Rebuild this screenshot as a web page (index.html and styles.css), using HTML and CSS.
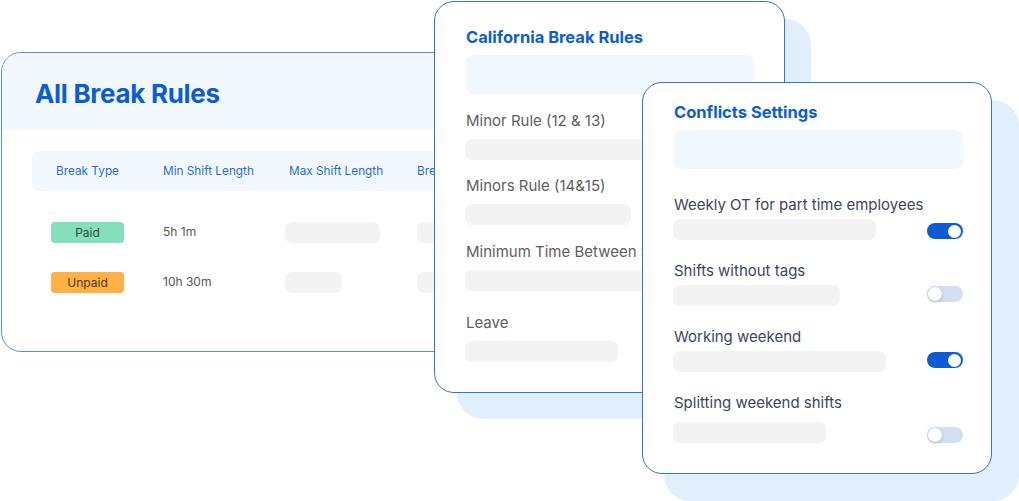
FILE: index.html
```html
<!DOCTYPE html>
<html lang="en">
<head>
<meta charset="utf-8">
<title>Break Rules</title>
<link rel="stylesheet" href="styles.css">
</head>
<body>
<div class="canvas">
  <section class="card card-all">
    <header class="all-head"><h1 class="all-title">All Break Rules</h1></header>
    <div class="table">
      <div class="thead">
        <span>Break Type</span>
        <span>Min Shift Length</span>
        <span>Max Shift Length</span>
        <span>Break Length</span>
      </div>
      <div class="trow">
        <span class="pill pill-paid">Paid</span>
        <span class="cell">5h 1m</span>
        <span class="bar bar-w95"></span>
        <span class="bar bar-w80"></span>
      </div>
      <div class="trow">
        <span class="pill pill-unpaid">Unpaid</span>
        <span class="cell">10h 30m</span>
        <span class="bar bar-w57"></span>
        <span class="bar bar-w80"></span>
      </div>
    </div>
  </section>

  <div class="backdrop backdrop-ca"></div>
  <section class="card card-ca">
    <h2 class="card-title">California Break Rules</h2>
    <div class="lightbox"></div>
    <div class="field">
      <div class="label">Minor Rule (12 &amp; 13)</div>
      <div class="bar fbar bar-w240"></div>
    </div>
    <div class="field field-tight">
      <div class="label">Minors Rule (14&amp;15)</div>
      <div class="bar fbar bar-w166"></div>
    </div>
    <div class="field">
      <div class="label">Minimum Time Between Shifts</div>
      <div class="bar fbar bar-w240"></div>
    </div>
    <div class="field field-leave">
      <div class="label">Leave</div>
      <div class="bar fbar bar-w153"></div>
    </div>
  </section>

  <div class="backdrop backdrop-cs"></div>
  <section class="card card-cs">
    <h2 class="card-title">Conflicts Settings</h2>
    <div class="lightbox"></div>
    <div class="setting setting-first">
      <div class="label label-dark">Weekly OT for part time employees</div>
      <div class="setting-row">
        <div class="bar sbar bar-w203"></div>
        <span class="toggle on t-down2"><span class="knob"></span></span>
      </div>
    </div>
    <div class="setting">
      <div class="label label-dark">Shifts without tags</div>
      <div class="setting-row">
        <div class="bar sbar bar-w167"></div>
        <span class="toggle off t-up2"><span class="knob"></span></span>
      </div>
    </div>
    <div class="setting">
      <div class="label label-dark">Working weekend</div>
      <div class="setting-row">
        <div class="bar sbar bar-w213"></div>
        <span class="toggle on t-up2"><span class="knob"></span></span>
      </div>
    </div>
    <div class="setting setting-last">
      <div class="label label-dark">Splitting weekend shifts</div>
      <div class="setting-row">
        <div class="bar sbar bar-w153"></div>
        <span class="toggle off t-down3"><span class="knob"></span></span>
      </div>
    </div>
  </section>
</div>
</body>
</html>
```

FILE: styles.css
```css
* { box-sizing: border-box; margin: 0; padding: 0; }
html, body { width: 1019px; height: 501px; overflow: hidden; background: #ffffff; }
body { font-family: Inter, "Noto Sans", "DejaVu Sans", sans-serif; }

.canvas { position: relative; width: 1019px; height: 501px; overflow: hidden; }

.card {
  position: absolute;
  background: #ffffff;
  border: 1px solid #2f73dc;
  border-radius: 20px;
  overflow: hidden;
}
.backdrop {
  position: absolute;
  background: #e1effd;
  border-radius: 26px;
}

/* ---- All Break Rules ---- */
.card-all {
  left: 1px; top: 52px; width: 560px; height: 300px;
  border-color: #5690e7;
}
.all-head {
  height: 77px;
  background: #f2f8ff;
  display: flex;
  align-items: center;
  padding-left: 33px;
  padding-top: 3px;
}
.all-title {
  font-size: 26px;
  font-weight: 700;
  color: #0b5dd6;
  letter-spacing: -0.3px;
}
.table { padding: 21px 0 0 30px; }
.thead {
  height: 40px;
  background: #f2f8ff;
  border-radius: 8px;
  display: grid;
  grid-template-columns: 107px 126px 128px auto;
  align-items: center;
  padding-left: 24px;
  font-size: 11.8px;
  color: #2a6dd7;
  white-space: nowrap;
}
.trow {
  display: grid;
  grid-template-columns: 112px 122px 132px auto;
  align-items: center;
  padding-left: 19px;
  height: 21px;
  margin-top: 31px;
}
.trow + .trow { margin-top: 29px; }
.pill {
  width: 73px; height: 21px;
  border-radius: 4px;
  display: flex; align-items: center; justify-content: center;
  font-size: 12px;
}
.pill-paid { background: #85dfbb; color: #2c4b40; }
.pill-unpaid { background: #ffb142; color: #4b3a22; }
.cell { font-size: 12px; color: #555555; margin-top: -2px; }

.bar { display: block; height: 21px; background: #f3f3f3; border-radius: 7px; }
.bar-w57 { width: 57px; }
.bar-w80 { width: 80px; }
.bar-w95 { width: 95px; }
.bar-w153 { width: 153px; }
.bar-w166 { width: 166px; }
.bar-w167 { width: 167px; }
.bar-w203 { width: 203px; }
.bar-w213 { width: 213px; }
.bar-w240 { width: 240px; }

/* ---- shared card parts ---- */
.card-title {
  font-size: 16.5px;
  line-height: 20px;
  font-weight: 700;
  color: #0b5dd6;
  white-space: nowrap;
}
.lightbox {
  height: 39px;
  background: #f1f7ff;
  border-radius: 8px;
}
.label {
  font-size: 15px;
  line-height: 20px;
  color: #5e5e5e;
  white-space: nowrap;
}
.label-dark { color: #3c4759; }

/* ---- California ---- */
.backdrop-ca { left: 457px; top: 19px; width: 354px; height: 400px; }
.card-ca {
  left: 434px; top: 1px; width: 351px; height: 392px;
  padding: 25px 30px 0 31px;
}
.card-ca .lightbox { margin-top: 8px; }
.field { margin-top: 17px; }
.field-tight { margin-top: 16px; }
.field-leave { margin-top: 22px; }
.fbar { margin-top: 8px; margin-left: -1px; }

/* ---- Conflicts ---- */
.backdrop-cs { left: 664px; top: 100px; width: 355px; height: 401px; }
.card-cs {
  left: 642px; top: 82px; width: 350px; height: 392px;
  padding: 19px 28px 0 31px;
}
.card-cs .lightbox { margin-top: 8px; }
.setting { margin-top: 21px; }
.setting-first { margin-top: 26px; }
.setting-row {
  margin-top: 4px;
  display: flex;
  align-items: center;
  justify-content: space-between;
}
.setting-last .setting-row { margin-top: 8px; }
.sbar { margin-left: -1px; }

.toggle {
  position: relative;
  display: block;
  width: 36px; height: 16px;
  border-radius: 8px;
}
.t-down2 { margin-top: 3px; }
.t-down3 { margin-top: 6px; }
.t-up2 { margin-top: -3px; }
.toggle.on { background: #0b5cd5; }
.toggle.off { background: #d2def1; }
.knob {
  position: absolute;
  top: 1.5px;
  width: 13px; height: 13px;
  border-radius: 50%;
  background: #ffffff;
}
.toggle.on .knob { right: 2px; }
.toggle.off .knob { left: 1px; top: 1px; width: 14px; height: 14px; box-shadow: 0 1px 3px rgba(40, 60, 100, 0.3); }
```
